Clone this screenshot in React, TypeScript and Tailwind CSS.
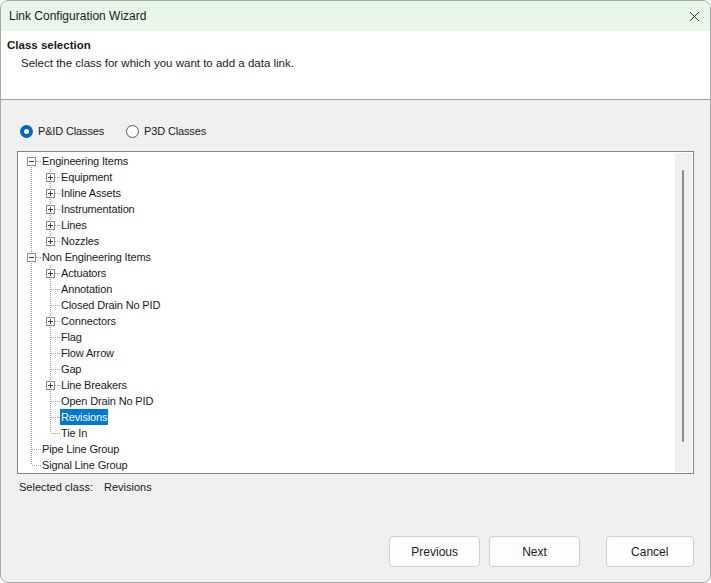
import { X } from "lucide-react";

type Row = {
  depth: number;
  label: string;
  box?: "plus" | "minus";
  last?: boolean;
  first?: boolean;
  selected?: boolean;
};

const rows: Row[] = [
  { depth: 0, label: "Engineering Items", box: "minus", first: true },
  { depth: 1, label: "Equipment", box: "plus" },
  { depth: 1, label: "Inline Assets", box: "plus" },
  { depth: 1, label: "Instrumentation", box: "plus" },
  { depth: 1, label: "Lines", box: "plus" },
  { depth: 1, label: "Nozzles", box: "plus", last: true },
  { depth: 0, label: "Non Engineering Items", box: "minus" },
  { depth: 1, label: "Actuators", box: "plus" },
  { depth: 1, label: "Annotation" },
  { depth: 1, label: "Closed Drain No PID" },
  { depth: 1, label: "Connectors", box: "plus" },
  { depth: 1, label: "Flag" },
  { depth: 1, label: "Flow Arrow" },
  { depth: 1, label: "Gap" },
  { depth: 1, label: "Line Breakers", box: "plus" },
  { depth: 1, label: "Open Drain No PID" },
  { depth: 1, label: "Revisions", selected: true },
  { depth: 1, label: "Tie In", last: true },
  { depth: 0, label: "Pipe Line Group" },
  { depth: 0, label: "Signal Line Group", last: true },
];

const dot = { stroke: "#a0a0a0", strokeWidth: 1, strokeDasharray: "1 1", shapeRendering: "crispEdges" as const };

// vertical guide for an ancestor that still has siblings below
function Guide() {
  return (
    <svg width="19" height="16" className="shrink-0">
      <line x1="9.5" y1="0" x2="9.5" y2="16" {...dot} />
    </svg>
  );
}

function Connector({ row }: { row: Row }) {
  const top = row.first ? 8 : 0;
  const bottom = row.last ? 8 : 16;
  return (
    <svg width="19" height="16" className="shrink-0">
      <line x1="9.5" y1={top} x2="9.5" y2={bottom} {...dot} />
      <line x1="10" y1="8.5" x2="19" y2="8.5" {...dot} />
      {row.box && (
        <g shapeRendering="crispEdges">
          <rect x="5.5" y="4.5" width="8" height="8" fill="#ffffff" stroke="#8e8f8f" />
          <line x1="7" y1="8.5" x2="12" y2="8.5" stroke="#3c3c3c" />
          {row.box === "plus" && <line x1="9.5" y1="6" x2="9.5" y2="11" stroke="#3c3c3c" />}
        </g>
      )}
    </svg>
  );
}

function Radio({ checked, label }: { checked?: boolean; label: string }) {
  return (
    <label className="flex items-center gap-[5px]">
      {checked ? (
        <span className="w-[13px] h-[13px] rounded-full bg-[#0067c0] flex items-center justify-center">
          <span className="w-[5px] h-[5px] rounded-full bg-white" />
        </span>
      ) : (
        <span className="w-[13px] h-[13px] rounded-full bg-white border border-[#5a5a5a]" />
      )}
      <span>{label}</span>
    </label>
  );
}

function Btn({ children, w = "w-[91px]" }: { children: string; w?: string }) {
  return (
    <button className={`${w} h-[31px] bg-[#fdfdfd] border border-[#d0d0d0] rounded-[4px] text-[12px] text-[#1a1a1a]`}>
      {children}
    </button>
  );
}

export default function App() {
  return (
    <div className="w-[711px] h-[583px] bg-white" style={{ fontFamily: '"Liberation Sans", Arial, sans-serif' }}>
      <div className="w-[711px] h-[583px] border border-[#a9a9a9] rounded-[8px] overflow-hidden flex flex-col bg-[#f0f0f0] text-[#1a1a1a]">
        {/* Title bar */}
        <div className="h-[30px] bg-[#e9f6ea] flex items-center justify-between pl-[8px] pr-[7px] shrink-0">
          <span className="text-[12px]">Link Configuration Wizard</span>
          <X size={17} strokeWidth={1.2} className="text-[#1a1a1a]" />
        </div>

        {/* Header */}
        <div className="h-[69px] bg-white border-b border-[#a0a0a0] shrink-0 pl-[6px] pt-[7px]">
          <div className="text-[11.5px] font-bold leading-[14px]">Class selection</div>
          <div className="text-[11.5px] leading-[14px] mt-[4px] pl-[14px]">Select the class for which you want to add a data link.</div>
        </div>

        {/* Body */}
        <div className="flex-1 flex flex-col px-[16px] pt-[23px] text-[11px]">
          <div className="flex items-center gap-[22px] h-[16px] pl-[3px] tracking-[-0.15px]">
            <Radio checked label="P&ID Classes" />
            <Radio label="P3D Classes" />
          </div>

          <div className="mt-[12px] h-[323px] border border-[#82878f] bg-white p-px flex">
            <div className="flex-1 pl-[3px] tracking-[-0.15px]">
              {rows.map((r) => (
                <div key={r.label} className="flex items-center h-[16px]">
                  {r.depth === 1 && <Guide />}
                  <Connector row={r} />
                  <span
                    className={`px-[1px] h-[16px] leading-[16px] whitespace-nowrap ${
                      r.selected ? "bg-[#0078d7] text-white" : "text-[#1a1a1a]"
                    }`}
                  >
                    {r.label}
                  </span>
                </div>
              ))}
            </div>
            <div className="w-[17px] bg-[#f0f0f0] pl-[7px] pt-[17px] pb-[30px] flex flex-col">
              <div className="w-[2px] flex-1 bg-[#8a8a8a] rounded-full" />
            </div>
          </div>

          <div className="mt-[5px] h-[16px] leading-[16px] pl-[2px] flex">
            <span>Selected class:</span>
            <span className="ml-[11px]">Revisions</span>
          </div>

          <div className="mt-auto mb-[15px] flex ml-[372px]">
            <Btn w="w-[92px]">Previous</Btn>
            <div className="w-[9px]" />
            <Btn>Next</Btn>
            <div className="w-[26px]" />
            <Btn w="w-[89px]">Cancel</Btn>
          </div>
        </div>
      </div>
    </div>
  );
}
